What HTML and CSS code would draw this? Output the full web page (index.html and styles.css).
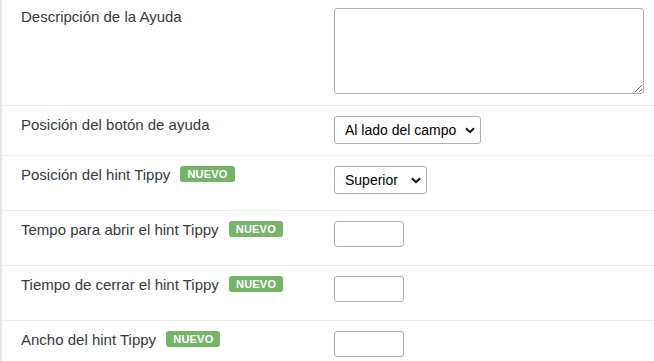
FILE: index.html
```html
<!DOCTYPE html>
<html lang="es">
<head>
<meta charset="utf-8">
<title>Ayuda</title>
<link rel="stylesheet" href="styles.css">
</head>
<body>
<div class="form">
  <div class="row first">
    <div class="label">Descripción de la Ayuda</div>
    <div class="control"><textarea class="textarea"></textarea></div>
  </div>
  <div class="row">
    <div class="label">Posición del botón de ayuda</div>
    <div class="control">
      <select class="select">
        <option>Al lado del campo</option>
        <option>En la etiqueta</option>
      </select>
    </div>
  </div>
  <div class="row">
    <div class="label tall">Posición del hint Tippy <span class="badge">NUEVO</span></div>
    <div class="control">
      <select class="select">
        <option>Superior</option>
        <option>Inferior</option>
        <option>Izquierda</option>
        <option>Derecha</option>
      </select>
    </div>
  </div>
  <div class="row">
    <div class="label tall">Tempo para abrir el hint Tippy <span class="badge">NUEVO</span></div>
    <div class="control"><input class="input" type="text"></div>
  </div>
  <div class="row">
    <div class="label tall">Tiempo de cerrar el hint Tippy <span class="badge">NUEVO</span></div>
    <div class="control"><input class="input" type="text"></div>
  </div>
  <div class="row">
    <div class="label tall">Ancho del hint Tippy <span class="badge">NUEVO</span></div>
    <div class="control"><input class="input" type="text"></div>
  </div>
</div>
</body>
</html>
```
FILE: styles.css
```css
html, body {
  margin: 0;
  padding: 0;
  background: #ffffff;
}
body {
  font-family: "Liberation Sans", Arial, sans-serif;
  color: #353a42;
  overflow: hidden;
}
.form {
  border-left: 2px solid #e4e8ee;
}
.row {
  display: grid;
  grid-template-columns: 332px 1fr;
  padding: 10px 10px 11px 0;
  border-top: 1px solid #eceef1;
}
.row.first {
  border-top: none;
  padding-top: 8px;
}
.label {
  padding-left: 19px;
  font-size: 15px;
  line-height: 17px;
}
.label.tall {
  min-height: 33px;
}
.badge {
  display: inline-block;
  vertical-align: top;
  margin-left: 6px;
  height: 16px;
  line-height: 16px;
  padding: 0 7px;
  border-radius: 3px;
  background: #76b46c;
  color: #ffffff;
  font-size: 11px;
  font-weight: bold;
  letter-spacing: 0.2px;
}
.control {
  display: flex;
  align-items: flex-start;
}
.textarea {
  display: block;
  box-sizing: border-box;
  width: 310px;
  height: 86px;
  margin: 0;
  border: 1px solid #a9b0bb;
  border-radius: 3px;
  font-family: "Liberation Sans", Arial, sans-serif;
  font-size: 14px;
}
.select {
  -webkit-appearance: none;
  appearance: none;
  box-sizing: border-box;
  height: 28px;
  margin: 0;
  padding: 0 23px 0 10px;
  border: 1px solid #a9b0bb;
  border-radius: 3px;
  background-color: #ffffff;
  background-image: url("data:image/svg+xml,%3Csvg xmlns='http://www.w3.org/2000/svg' width='10' height='7' viewBox='0 0 10 7'%3E%3Cpath d='M1 1.2 L5 5.2 L9 1.2' fill='none' stroke='%23111' stroke-width='2'/%3E%3C/svg%3E");
  background-repeat: no-repeat;
  background-position: right 5px center;
  background-size: 10px 7px;
  color: #000000;
  font-family: "Liberation Sans", Arial, sans-serif;
  font-size: 14px;
}
.input {
  display: block;
  box-sizing: border-box;
  width: 70px;
  height: 26px;
  margin: 0;
  border: 1px solid #a9b0bb;
  border-radius: 3px;
  font-family: "Liberation Sans", Arial, sans-serif;
  font-size: 14px;
}
```
